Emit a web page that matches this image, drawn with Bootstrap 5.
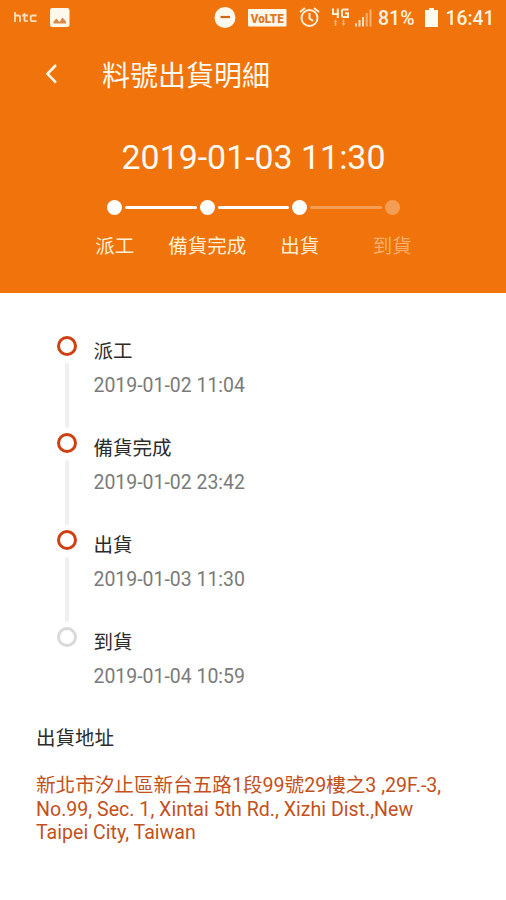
<!DOCTYPE html>
<html lang="zh-Hant">
<head>
<meta charset="utf-8">
<meta name="viewport" content="width=device-width, initial-scale=1">
<title>料號出貨明細</title>
<link href="https://cdn.jsdelivr.net/npm/bootstrap@5.3.0/dist/css/bootstrap.min.css" rel="stylesheet">
<style>
  body { font-family: Roboto, "Noto Sans CJK TC", sans-serif; color: #2b2b2b; min-height: 900px; overflow-x: hidden; }
  .app-header { background: #f0730b; height: 293px; color: #fff; }
  .status-bar { height: 36px; padding-left: 14px; }
  .status-bar svg { display: block; flex: none; }
  .photo-icon { margin-left: 13px; }
  .battery-icon { margin-left: 8px; }
  .clock-text { margin-left: 5px; }
  .title-bar { height: 78px; padding-left: 43px; }
  .title-text { font-size: 28px; line-height: 40px; margin: 3px 0 0 41px; font-weight: 400; color: #fffaf0; }
  .hero-time { font-size: 33.9px; line-height: 40px; margin-top: 24px; padding-left: 1px; color: #fffaf0; }
  .stepper { width: 370px; margin: 22px 0 0 68.5px; }
  .stepper-track { height: 15px; }
  .stepper-dot { width: 15px; height: 15px; flex: none; }
  .stepper-line { height: 3px; flex: 1 1 0; background: #fff; }
  .line-left { margin-right: 3px; border-radius: 0 2px 2px 0; }
  .line-right { margin-left: 3px; border-radius: 2px 0 0 2px; }
  .pending { opacity: .3; }
  .stepper-label { font-size: 19.5px; line-height: 28px; margin-top: 17.5px; color: #ffefd2; white-space: nowrap; }
  .stepper-label.waiting { color: #f9b06f; }
  .timeline { padding: 43px 0 0 56px; }
  .timeline-item { height: 97px; }
  .timeline-rail { width: 21px; margin-right: 16.5px; }
  .timeline-ring { width: 20px; height: 20px; border: 3px solid #cf3f10; flex: none; }
  .timeline-ring.waiting { border-color: #d9d9d9; }
  .timeline-line { width: 4px; height: 65px; margin-top: 7px; border-radius: 2px; background: #f0f0f0; }
  .timeline-name { font-size: 19.5px; line-height: 28px; padding-top: 2px; }
  .timeline-time { font-size: 19.45px; line-height: 24px; margin-top: 8px; color: #7a7a7a; }
  .address { padding-left: 36px; }
  .address-title { font-size: 19.5px; line-height: 28px; padding-top: 1px; }
  .address-text { font-size: 19.6px; line-height: 23.5px; margin-top: 21px; width: 430px; color: #c4511c; }
</style>
</head>
<body class="bg-white">
<header class="app-header">
  <div class="status-bar d-flex align-items-center">
    <svg width="23" height="36" viewBox="0 0 23 36" fill="none" stroke="#ffdfbd" stroke-width="1.8"><path d="M1 12v10M1 17q0-1.500 1.500-1.500h2q1.500 0 1.500 1.500v5M10.500 13v7q0 1.200 1.200 1.200H14M8 15.500h6M22.500 15.500h-4q-1.800 0-1.800 1.800v2q0 1.900 1.800 1.900h4"/></svg>
    <svg class="photo-icon" width="20" height="36" viewBox="0 0 20 36"><rect y="8" width="19.500" height="19" rx="2.500" fill="#fff8ed"/><path d="M3.500 23.500v-2l3-3 3 3.500 3-4.500 3.500 4v2z" fill="#d98a48"/></svg>
    <div class="d-flex align-items-center ms-auto">
      <svg width="164" height="36" viewBox="0 0 164 36">
        <circle cx="11" cy="17.500" r="10.500" fill="#fff8ed"/><path d="M6.500 17h9.500" stroke="#c9691c" stroke-width="2.200"/>
        <rect x="34" y="9" width="38.500" height="17.500" rx="1" fill="#fff8ed"/>
        <text x="53.200" y="22.600" text-anchor="middle" font-family="Roboto, sans-serif" font-size="13" font-weight="900" fill="#e07a24" textLength="33" lengthAdjust="spacingAndGlyphs">VoLTE</text>
        <g fill="none" stroke="#ffefd9" stroke-width="2"><circle cx="95.500" cy="18" r="8"/><path d="M95.500 13v5.500l3.500 2.300M86 12l5-4M105 12l-5-4"/></g>
        <g fill="none" stroke="#ffefd9" stroke-width="2"><path d="M119 8.500v5.500h6M123.800 8.500v9.500M134.500 9.500h-5q-1.500 0-1.500 1v5.500q0 1 1.500 1h4.500v-3.800h-3"/></g>
        <path d="M119.500 22l2-2.500 2 2.500h-1.200v4h-1.600v-4zM127.500 23.500h1.200v-4h1.600v4h1.200l-2 2.500z" fill="#f9b878"/>
        <path d="M142 26.500v-3M145.500 26.500v-6.500M149 26.500v-9.500" stroke="#ffe2bd" stroke-width="2"/><path d="M152.700 26.500v-13.500M156.500 26.500v-17" stroke="#f7b27a" stroke-width="2"/>
      </svg>
      <svg width="38" height="36" viewBox="0 0 38 36"><text x="0" y="24.800" font-family="Roboto, sans-serif" font-size="19.500" font-weight="500" fill="#fff3df" textLength="36.500" lengthAdjust="spacingAndGlyphs">81%</text></svg>
      <svg class="battery-icon" width="16" height="36" viewBox="0 0 16 36"><path d="M1 10h4V8h5v2h4v17H1z" fill="#fffaf0"/></svg>
      <svg class="clock-text" width="61" height="36" viewBox="0 0 61 36"><text x="0.500" y="24.800" font-family="Roboto, sans-serif" font-size="19.500" font-weight="500" fill="#fff3df" textLength="49" lengthAdjust="spacingAndGlyphs">16:41</text></svg>
    </div>
  </div>
  <nav class="title-bar d-flex align-items-center">
    <svg width="18" height="24" viewBox="0 0 18 24" fill="none" stroke="#fff8ed" stroke-width="2.600"><path d="M13 2L4.500 10.800l8.500 8.900"/></svg>
    <h1 class="title-text">料號出貨明細</h1>
  </nav>
  <div class="hero-time text-center">2019-01-03 11:30</div>
  <div class="stepper d-flex">
    <div class="w-25 d-flex flex-column align-items-center">
      <div class="stepper-track d-flex align-items-center w-100"><span class="stepper-line line-left invisible"></span><span class="stepper-dot rounded-circle bg-white"></span><span class="stepper-line line-right"></span></div>
      <div class="stepper-label">派工</div>
    </div>
    <div class="w-25 d-flex flex-column align-items-center">
      <div class="stepper-track d-flex align-items-center w-100"><span class="stepper-line line-left"></span><span class="stepper-dot rounded-circle bg-white"></span><span class="stepper-line line-right"></span></div>
      <div class="stepper-label">備貨完成</div>
    </div>
    <div class="w-25 d-flex flex-column align-items-center">
      <div class="stepper-track d-flex align-items-center w-100"><span class="stepper-line line-left"></span><span class="stepper-dot rounded-circle bg-white"></span><span class="stepper-line line-right pending"></span></div>
      <div class="stepper-label">出貨</div>
    </div>
    <div class="w-25 d-flex flex-column align-items-center">
      <div class="stepper-track d-flex align-items-center w-100"><span class="stepper-line line-left pending"></span><span class="stepper-dot rounded-circle bg-white pending"></span><span class="stepper-line line-right invisible"></span></div>
      <div class="stepper-label waiting">到貨</div>
    </div>
  </div>
</header>
<main>
  <section class="timeline">
    <div class="timeline-item d-flex">
      <div class="timeline-rail d-flex flex-column align-items-center"><span class="timeline-ring rounded-circle"></span><span class="timeline-line"></span></div>
      <div><div class="timeline-name">派工</div><div class="timeline-time">2019-01-02 11:04</div></div>
    </div>
    <div class="timeline-item d-flex">
      <div class="timeline-rail d-flex flex-column align-items-center"><span class="timeline-ring rounded-circle"></span><span class="timeline-line"></span></div>
      <div><div class="timeline-name">備貨完成</div><div class="timeline-time">2019-01-02 23:42</div></div>
    </div>
    <div class="timeline-item d-flex">
      <div class="timeline-rail d-flex flex-column align-items-center"><span class="timeline-ring rounded-circle"></span><span class="timeline-line"></span></div>
      <div><div class="timeline-name">出貨</div><div class="timeline-time">2019-01-03 11:30</div></div>
    </div>
    <div class="timeline-item d-flex">
      <div class="timeline-rail d-flex flex-column align-items-center"><span class="timeline-ring waiting rounded-circle"></span></div>
      <div><div class="timeline-name">到貨</div><div class="timeline-time">2019-01-04 10:59</div></div>
    </div>
  </section>
  <section class="address">
    <h2 class="address-title mb-0 fw-normal">出貨地址</h2>
    <p class="address-text mb-0">新北市汐止區新台五路1段99號29樓之3 ,29F.-3,<br>No.99, Sec. 1, Xintai 5th Rd., Xizhi Dist.,New<br>Taipei City, Taiwan</p>
  </section>
</main>
<script src="https://cdn.jsdelivr.net/npm/bootstrap@5.3.0/dist/js/bootstrap.bundle.min.js"></script>
</body>
</html>
